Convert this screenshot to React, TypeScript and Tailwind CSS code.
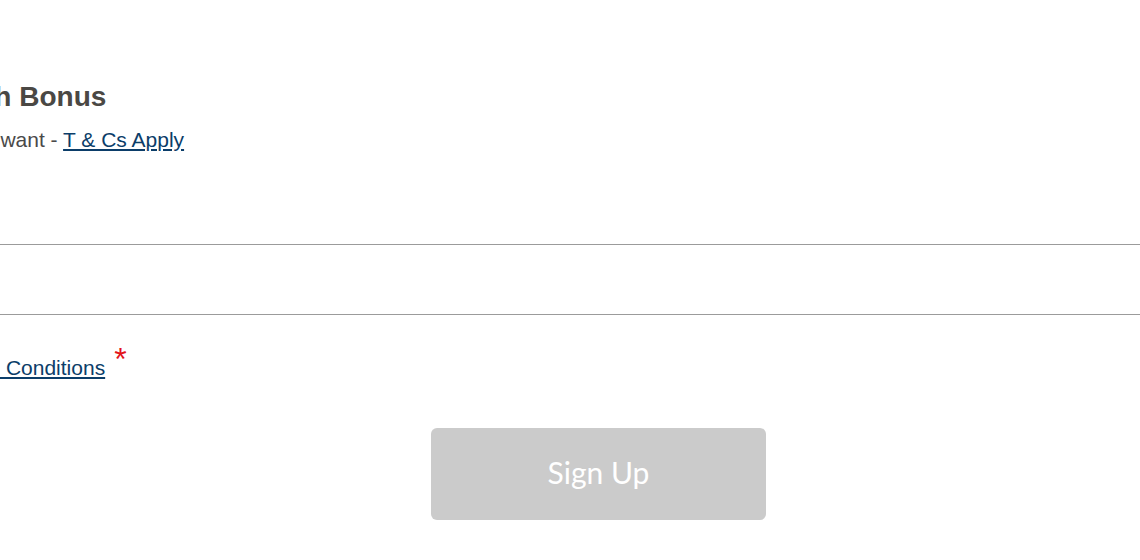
const App = () => {
  return (
    <div className="w-[1140px] h-[560px] overflow-hidden bg-white font-['Liberation_Sans',Arial,sans-serif]">
      <div className="pt-[81px]">
        <h2 className="-ml-[57px] whitespace-nowrap text-[28px] leading-[32px] font-bold text-[#4a4844]">
          Cash Bonus
        </h2>
        <p className="mt-[15px] -ml-[184px] whitespace-nowrap text-[21px] leading-[24px] text-[#4a4a4a]">
          Use it however you want -{" "}
          <a href="#" className="text-[#0b3d69] underline underline-offset-2">
            T &amp; Cs Apply
          </a>
        </p>
      </div>

      <div className="mt-[92px]">
        <div className="h-[70px] border-t border-[#9b9b9b]" />
        <div className="border-t border-[#9b9b9b]" />
      </div>

      <p className="mt-[33px] -ml-[212px] whitespace-nowrap text-[21px] leading-[24px] text-[#4a4a4a]">
        I accept the{" "}
        <a href="#" className="text-[#0b3d69] underline underline-offset-2">
          Terms and Conditions
        </a>
        <span className="relative -top-[5px] ml-[9px] text-[32px] leading-none text-[#e3141b]">*</span>
      </p>

      <div className="mt-[48px] pl-[431px]">
        <button
          disabled
          className="w-[335px] h-[92px] pb-[4px] rounded-[6px] bg-[#cbcbcb] text-white text-[30px] font-['Lato',sans-serif]"
        >
          Sign Up
        </button>
      </div>
    </div>
  );
};

export default App;
